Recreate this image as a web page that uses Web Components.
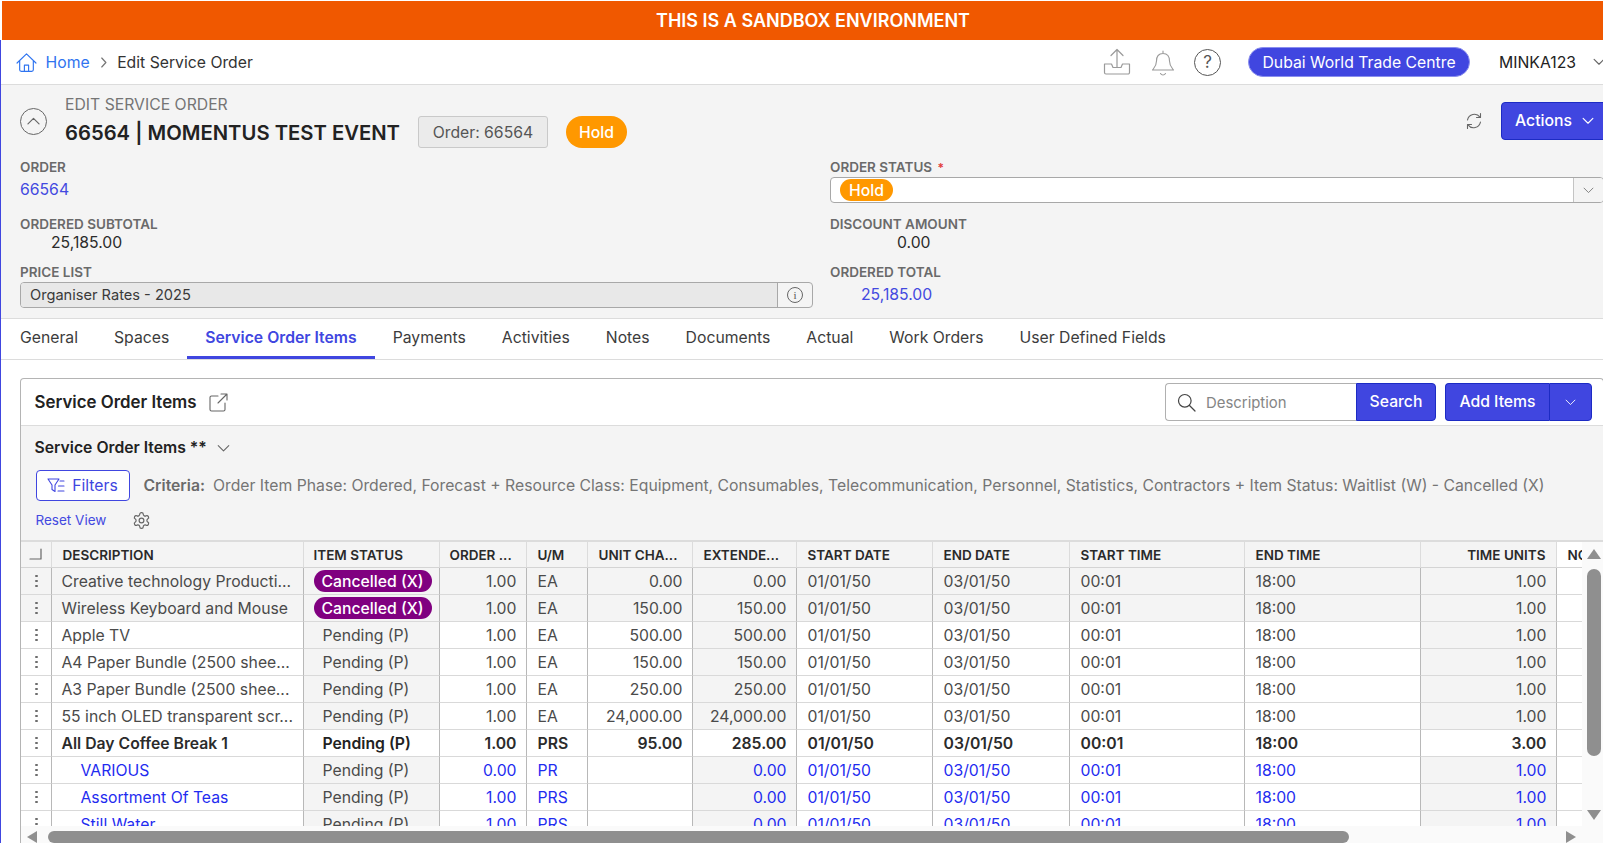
<!DOCTYPE html>
<html>
<head>
<meta charset="utf-8">
<title>Edit Service Order</title>
<style>
  html, body { margin: 0; height: 100%; overflow: hidden; background: #fff; }
  body { font-family: Inter, "Liberation Sans", sans-serif; color: #2b2b2b; }
  #app { width: 1624px; height: 843px; display: flex; flex-direction: column; }
</style>
</head>
<body>
<div id="app">
  <app-banner>THIS IS A SANDBOX ENVIRONMENT</app-banner>
  <div style="border-left:1.5px solid #4046e0;display:flex;flex-direction:column;flex:1;min-height:0">
    <app-topbar></app-topbar>
    <order-header></order-header>
    <tab-bar></tab-bar>
    <items-card></items-card>
  </div>
</div>

<script>
const ICONS = {
  home: '<path d="M1 10.5 10 1.8l9 8.7M3.5 8.5V17a1.5 1.5 0 0 0 1.5 1.5h10a1.5 1.5 0 0 0 1.5-1.5V8.5M8 18.5v-6h4v6"/>',
  chevronR: '<path d="M4 1.5 10 8l-6 6.5"/>',
  chevronD: '<path d="M1.5 4.5 8 11l6.5-6.5"/>',
  chevronU: '<path d="M5 15 12 8l7 7"/>',
  upload: '<path d="M14 19V1.5M8 7.5l6-6 6 6"/><path d="M1.5 16h7l1.5 3.5h8l1.5-3.5h7v8.500a1.500 1.500 0 0 1-1.500 1.500H3a1.500 1.500 0 0 1-1.500-1.500z"/>',
  bell: '<path d="M12 1v2.500M12 3.500c-4.500 0-6.500 3.300-6.500 7.500 0 5-2.500 7-4 9h21c-1.500-2-4-4-4-9 0-4.200-2-7.500-6.500-7.500zM9.500 23.500c.6 1 1.500 1.500 2.500 1.500s1.900-.5 2.500-1.500"/>',
  refresh: '<path d="M2.500 8A7 7 0 0 1 15 5.200M15.500 10a7 7 0 0 1-12.500 2.800"/><path d="M15.500 1.500v4h-4M2.500 16.500v-4h4"/>',
  external: '<path d="M9 3H2.500A1.500 1.500 0 0 0 1 4.500v12A1.500 1.500 0 0 0 2.500 18h12a1.500 1.500 0 0 0 1.500-1.500V10M9 10l8.500-8.500M12 1h6v6"/>',
  search: '<circle cx="7.800" cy="7.800" r="6.300"/><path d="m12.500 12.500 5.500 5.500"/>',
  filter: '<path d="M1 2h11L8 8v6.500L5 12.500V8zM13 4h4M11.500 9h5.500M11 14h6"/>',
  gear: '<path d="M12.220 2h-.44a2 2 0 0 0-2 2v.18a2 2 0 0 1-1 1.730l-.43.250a2 2 0 0 1-2 0l-.15-.08a2 2 0 0 0-2.730.730l-.22.380a2 2 0 0 0 .730 2.730l.15.100a2 2 0 0 1 1 1.720v.510a2 2 0 0 1-1 1.740l-.15.090a2 2 0 0 0-.730 2.730l.22.380a2 2 0 0 0 2.730.730l.15-.08a2 2 0 0 1 2 0l.43.250a2 2 0 0 1 1 1.730V20a2 2 0 0 0 2 2h.44a2 2 0 0 0 2-2v-.18a2 2 0 0 1 1-1.730l.43-.250a2 2 0 0 1 2 0l.15.080a2 2 0 0 0 2.730-.730l.22-.390a2 2 0 0 0-.730-2.730l-.15-.08a2 2 0 0 1-1-1.740v-.5a2 2 0 0 1 1-1.740l.15-.09a2 2 0 0 0 .730-2.730l-.22-.380a2 2 0 0 0-2.730-.730l-.15.080a2 2 0 0 1-2 0l-.43-.250a2 2 0 0 1-1-1.730V4a2 2 0 0 0-2-2z"/><circle cx="12" cy="12" r="3"/>',
  corner: '<path d="M1 11h11V1"/>'
};
const BOXES = { home: 20, chevronR: 16, chevronD: 16, chevronU: 24, upload: 28, bell: 24, refresh: 18, external: 19, search: 19, filter: 18, gear: 24, corner: 13 };

class SoIcon extends HTMLElement {
  connectedCallback() {
    const name = this.getAttribute("name");
    const w = this.getAttribute("w") || BOXES[name];
    const h = this.getAttribute("h") || w;
    const sw = this.getAttribute("sw") || 1.2;
    const box = BOXES[name];
    this.attachShadow({ mode: "open" }).innerHTML = `
      <style>
        :host { display: inline-flex; flex: none; line-height: 0; }
        svg { fill: none; stroke: currentColor; stroke-linecap: round; stroke-linejoin: round; }
      </style>
      <svg width="${w}" height="${h}" viewBox="0 0 ${box} ${box}" stroke-width="${sw}">${ICONS[name]}</svg>`;
  }
}
customElements.define("so-icon", SoIcon);

class AppBanner extends HTMLElement {
  constructor() {
    super();
    this.attachShadow({ mode: "open" }).innerHTML = `
      <style>
        :host {
          display: flex; flex: none; height: 39px; margin: 1px 0 0 2px;
          align-items: center; justify-content: center;
          background: #f05800; color: #fff;
          font: 600 18px/20px Inter, "Liberation Sans", sans-serif;
        }
      </style>
      <slot></slot>`;
  }
}
customElements.define("app-banner", AppBanner);

class AppTopbar extends HTMLElement {
  constructor() {
    super();
    this.attachShadow({ mode: "open" }).innerHTML = `
      <style>
        :host {
          display: flex; flex: none; height: 44px; align-items: center;
          padding: 0 19px 0 14.500px; border-bottom: 1px solid #dcdcdc;
          font: 400 15.750px Inter, "Liberation Sans", sans-serif; color: #333;
        }
        .home { color: #2f74f0; display: flex; align-items: center; gap: 9px; }
        .sep { color: #777; margin: 0 7.500px 0 9px; display: flex; }
        .right { margin-left: auto; display: flex; align-items: center; }
        .icons { display: flex; align-items: center; color: #9a9a9a; }
        .help {
          width: 27px; height: 27px; box-sizing: border-box; border: 1.500px solid #555; border-radius: 50%;
          display: flex; align-items: center; justify-content: center;
          font-size: 17px; color: #555; margin-left: 19px;
        }
        .site {
          margin-left: 27px; height: 30px; width: 222px; box-sizing: border-box;
          display: flex; align-items: center; justify-content: center;
          background: #4046e0; color: #fff; border-radius: 15px; border: 1px solid #8a8eee;
        }
        .user { margin-left: 29px; color: #222; }
        .chev { margin-left: 17px; color: #666; display: flex; }
      </style>
      <span class="home"><so-icon name="home" w="21" sw="1.100"></so-icon>Home</span>
      <span class="sep"><so-icon name="chevronR" w="11" sw="1.800"></so-icon></span>
      <span>Edit Service Order</span>
      <div class="right">
        <div class="icons">
          <so-icon name="upload" sw="1.200"></so-icon>
          <so-icon name="bell" w="24" h="28" sw="1.100" style="margin-left:20px"></so-icon>
        </div>
        <div class="help">?</div>
        <div class="site">Dubai World Trade Centre</div>
        <span class="user">MINKA123</span>
        <span class="chev"><so-icon name="chevronD" w="12" sw="1.500"></so-icon></span>
      </div>`;
  }
}
customElements.define("app-topbar", AppTopbar);

class SoField extends HTMLElement {
  constructor() {
    super();
    const req = this.hasAttribute("required") ? ' <i>*</i>' : "";
    this.attachShadow({ mode: "open" }).innerHTML = `
      <style>
        :host { display: block; min-width: 0; }
        label {
          display: block; height: 16px; line-height: 16px; margin-bottom: var(--gap, 2px);
          font-size: 13.500px; font-weight: 600; color: #6a6a6a; white-space: nowrap;
        }
        i { color: #e23b3b; font-style: normal; font-size: 12px; margin-left: 2px; }
      </style>
      <label>${this.getAttribute("label")}${req}</label>
      <slot></slot>`;
  }
}
customElements.define("so-field", SoField);

class OrderHeader extends HTMLElement {
  constructor() {
    super();
    this.attachShadow({ mode: "open" }).innerHTML = `
      <style>
        :host {
          display: block; flex: none; height: 234px; box-sizing: border-box;
          background: #f4f4f4; border-bottom: 1px solid #dcdcdc; padding: 10px 13px 0 19px;
          font: 400 15.750px/20px Inter, "Liberation Sans", sans-serif; color: #2b2b2b;
        }
        .head { display: flex; height: 53px; }
        .collapse {
          width: 27px; height: 27px; box-sizing: border-box; margin: 13px 18px 0 0;
          border: 1.300px solid #666; border-radius: 50%; color: #666;
          display: flex; align-items: center; justify-content: center;
        }
        .over { height: 18px; line-height: 20px; color: #757575; }
        .line { display: flex; align-items: center; height: 32px; margin-top: 3px; }
        h1 { margin: 0; font-size: 20.250px; font-weight: 600; line-height: 34px; height: 32px; color: #222; white-space: nowrap; }
        .chip {
          margin-left: 18px; width: 130px; height: 32px; box-sizing: border-box; padding-top: 1px;
          display: flex; align-items: center; justify-content: center;
          background: #ebebeb; border: 1px solid #c9c9c9; border-radius: 3px; color: #555;
        }
        .hold {
          margin-left: 18px; width: 61px; height: 32px; box-sizing: border-box; padding-top: 1px; border-radius: 16px;
          display: flex; align-items: center; justify-content: center;
          background: #ff9800; color: #fff; font-weight: 500;
        }
        .tools { margin-left: auto; display: flex; align-items: flex-start; padding-top: 7px; }
        .refresh { color: #666; margin: 10px 18px 0 0; }
        .actions {
          height: 38px; width: 110px; box-sizing: border-box; padding-left: 13px;
          display: flex; align-items: center; gap: 10px;
          background: #4046e0; color: #fff; border: 1px solid #1c2bc4; border-radius: 4px; font-weight: 500;
        }
        .fields {
          display: grid; grid-template-columns: 793px 1fr; column-gap: 17px;
          grid-template-rows: 45px 36px 44px; row-gap: 12px; margin-top: 11px;
          padding-right: 7px;
        }
        .link { color: #4349e0; }
        .num { padding-left: 31px; line-height: 19px; }
        .discount { padding-left: 67px; line-height: 19px; }
        .total { padding-left: 31px; color: #4349e0; line-height: 26px; }
        .price { display: flex; height: 26px; box-sizing: border-box; border: 1px solid #a8a8a8; border-radius: 4px; }
        .price span { flex: 1; background: #e8e8e8; border-right: 1px solid #a8a8a8; padding-left: 9px; line-height: 24px; font-size: 14.625px; color: #3a3a3a; border-radius: 3px 0 0 3px; }
        .info {
          flex: none; width: 34px; display: flex; align-items: center; justify-content: center;
        }
        .info b {
          width: 16px; height: 16px; box-sizing: border-box; border: 1px solid #666; border-radius: 50%;
          font: 400 11px/14px "Liberation Serif", serif; color: #555; text-align: center;
        }
        .select { display: flex; height: 26px; box-sizing: border-box; background: #fff; border: 1px solid #a8a8a8; border-radius: 4px; }
        .select div { flex: 1; padding-left: 9px; display: flex; align-items: center; }
        .select em {
          font-style: normal; font-weight: 500; color: #fff; background: #ff9800; border-radius: 11px;
          height: 22px; width: 53px; line-height: 23px; text-align: center;
        }
        .select span { flex: none; width: 29px; display: flex; align-items: center; justify-content: center; border-left: 1px solid #c4c4c4; background: #f4f4f4; color: #777; border-radius: 0 3px 3px 0; }
      </style>
      <div class="head">
        <div class="collapse"><so-icon name="chevronU" w="19" sw="1.500"></so-icon></div>
        <div>
          <div class="over">EDIT SERVICE ORDER</div>
          <div class="line">
            <h1>66564 | MOMENTUS TEST EVENT</h1>
            <div class="chip">Order: 66564</div>
            <div class="hold">Hold</div>
          </div>
        </div>
        <div class="tools">
          <so-icon class="refresh" name="refresh" sw="1.100"></so-icon>
          <div class="actions">Actions <so-icon name="chevronD" w="12" sw="1.500"></so-icon></div>
        </div>
      </div>
      <div class="fields">
        <so-field label="ORDER" style="--gap:5px"><div class="link">66564</div></so-field>
        <so-field label="ORDER STATUS" required>
          <div class="select"><div><em>Hold</em></div><span><so-icon name="chevronD" w="11" sw="1.300"></so-icon></span></div>
        </so-field>
        <so-field label="ORDERED SUBTOTAL" style="--gap:1px"><div class="num">25,185.00</div></so-field>
        <so-field label="DISCOUNT AMOUNT" style="--gap:1px"><div class="discount">0.00</div></so-field>
        <so-field label="PRICE LIST">
          <div class="price"><span>Organiser Rates - 2025</span><div class="info"><b>i</b></div></div>
        </so-field>
        <so-field label="ORDERED TOTAL"><div class="total">25,185.00</div></so-field>
      </div>`;
  }
}
customElements.define("order-header", OrderHeader);

class TabBar extends HTMLElement {
  constructor() {
    super();
    const tabs = ["General", "Spaces", "Service Order Items", "Payments", "Activities", "Notes", "Documents", "Actual", "Work Orders", "User Defined Fields"];
    this.attachShadow({ mode: "open" }).innerHTML = `
      <style>
        :host {
          display: flex; flex: none; height: 40px; border-bottom: 1px solid #dcdcdc; padding-left: 1px;
          font: 400 15.750px Inter, "Liberation Sans", sans-serif; color: #3c3c3c;
        }
        a { padding: 0 18px; display: flex; align-items: center; height: 40px; box-sizing: border-box; border-bottom: 3px solid transparent; white-space: nowrap; }
        a.on { color: #4046e0; font-weight: 600; border-bottom-color: #4046e0; }
      </style>
      ${tabs.map((t, i) => `<a class="${i == 2 ? "on" : ""}">${t}</a>`).join("")}`;
  }
}
customElements.define("tab-bar", TabBar);

class ItemsCard extends HTMLElement {
  constructor() {
    super();
    this.attachShadow({ mode: "open" }).innerHTML = `
      <style>
        :host {
          display: flex; flex-direction: column; flex: 1; min-height: 0; box-sizing: border-box;
          margin: 18px 20px 0 18.500px; border: 1px solid #b4b4b4; border-bottom: 0; border-radius: 4px 4px 0 0;
          font: 400 15.750px/20px Inter, "Liberation Sans", sans-serif; color: #333;
        }
        .top {
          flex: none; height: 47px; box-sizing: border-box; border-bottom: 1px solid #dcdcdc;
          display: flex; align-items: center; padding: 0 11px 0 14px;
        }
        .top b { font-size: 16.875px; font-weight: 600; color: #222; }
        .ext { color: #666; margin-left: 12px; }
        .right { margin-left: auto; display: flex; align-items: center; }
        .search { display: flex; width: 271px; height: 38px; box-sizing: border-box; }
        .search .box {
          flex: 1; display: flex; align-items: center; gap: 10px; padding-left: 11px;
          border: 1px solid #b0b0b0; border-right: 0; border-radius: 4px 0 0 4px; color: #444; background: #fff;
        }
        .box span { color: #858585; font-size: 14.900px; padding-top: 2px; }
        .btn { background: #4046e0; color: #fff; border: 1px solid #1c2bc4; font-weight: 500; display: flex; align-items: center; justify-content: center; box-sizing: border-box; }
        .search .btn { width: 80px; border-radius: 0 4px 4px 0; }
        .add { display: flex; height: 38px; margin-left: 9px; }
        .add .btn:first-child { width: 104px; border-radius: 4px 0 0 4px; border-right: 0; }
        .add .btn:last-child { width: 43px; border-radius: 0 4px 4px 0; }
        .filters { flex: none; background: #f4f4f4; padding: 11px 15px 10px; height: 114px; box-sizing: border-box; }
        .view { display: flex; align-items: center; height: 22px; margin-left: -1px; font-weight: 600; color: #222; white-space: nowrap; }
        .view so-icon { margin-left: 10px; color: #666; }
        .crit { display: flex; align-items: center; height: 31px; margin-top: 11px; white-space: nowrap; }
        .fbtn {
          width: 94px; height: 31px; box-sizing: border-box; border: 1px solid #4046e0; border-radius: 4px; background: #fff;
          color: #4046e0; display: flex; align-items: center; justify-content: center; gap: 7px;
        }
        .crit b { margin-left: 14px; color: #6a6a6a; font-weight: 600; }
        .crit span { margin-left: 8px; color: #757575; }
        .reset { display: flex; align-items: center; height: 20px; margin-top: 9px; font-size: 13.500px; color: #4349e0; }
        .reset so-icon { margin-left: 26px; color: #666; }
      </style>
      <div class="top">
        <b>Service Order Items</b>
        <so-icon class="ext" name="external" sw="1.100"></so-icon>
        <div class="right">
          <div class="search">
            <div class="box"><so-icon name="search" sw="1.200"></so-icon><span>Description</span></div>
            <div class="btn">Search</div>
          </div>
          <div class="add">
            <div class="btn">Add Items</div>
            <div class="btn"><so-icon name="chevronD" w="11" sw="1.300"></so-icon></div>
          </div>
        </div>
      </div>
      <div class="filters">
        <div class="view">Service Order Items **<so-icon name="chevronD" w="13" sw="1.300"></so-icon></div>
        <div class="crit">
          <div class="fbtn"><so-icon name="filter" sw="1.100"></so-icon>Filters</div>
          <b>Criteria:</b>
          <span>Order Item Phase: Ordered, Forecast + Resource Class: Equipment, Consumables, Telecommunication, Personnel, Statistics, Contractors + Item Status: Waitlist (W) - Cancelled (X)</span>
        </div>
        <div class="reset">Reset View<so-icon name="gear" w="19" sw="1.500"></so-icon></div>
      </div>
      <items-grid></items-grid>`;
  }
}
customElements.define("items-card", ItemsCard);

const COLS = [
  { t: "DESCRIPTION" }, { t: "ITEM STATUS" }, { t: "ORDER ..." }, { t: "U/M" }, { t: "UNIT CHA..." },
  { t: "EXTENDE..." }, { t: "START DATE" }, { t: "END DATE" }, { t: "START TIME" }, { t: "END TIME" },
  { t: "TIME UNITS", r: 1 }, { t: "NOTES" }
];
// kind: x = cancelled, n = normal, b = bold parent, k = blue child line
const ROWS = [
  ["x", "Creative technology Producti...", "Cancelled (X)", "1.00", "EA", "0.00", "0.00", "1.00"],
  ["x", "Wireless Keyboard and Mouse", "Cancelled (X)", "1.00", "EA", "150.00", "150.00", "1.00"],
  ["n", "Apple TV", "Pending (P)", "1.00", "EA", "500.00", "500.00", "1.00"],
  ["n", "A4 Paper Bundle (2500 shee...", "Pending (P)", "1.00", "EA", "150.00", "150.00", "1.00"],
  ["n", "A3 Paper Bundle (2500 shee...", "Pending (P)", "1.00", "EA", "250.00", "250.00", "1.00"],
  ["n", "55 inch OLED transparent scr...", "Pending (P)", "1.00", "EA", "24,000.00", "24,000.00", "1.00"],
  ["b", "All Day Coffee Break 1", "Pending (P)", "1.00", "PRS", "95.00", "285.00", "3.00"],
  ["k", "VARIOUS", "Pending (P)", "0.00", "PR", "", "0.00", "1.00"],
  ["k", "Assortment Of Teas", "Pending (P)", "1.00", "PRS", "", "0.00", "1.00"],
  ["k", "Still Water", "Pending (P)", "1.00", "PRS", "", "0.00", "1.00"]
];

class ItemsGrid extends HTMLElement {
  constructor() {
    super();
    const head = COLS.map(c => `<div class="hc ${c.r ? "end" : ""}">${c.t}</div>`).join("");
    const rows = ROWS.map(([kind, desc, status, qty, um, unit, ext, units]) => {
      const pill = status.startsWith("Cancelled") ? `<em>${status}</em>` : `<span class="st">${status}</span>`;
      const shade = kind == "n" || kind == "k";
      return `<div class="row ${kind}">
        <div class="c kebab"><i></i><i></i><i></i></div>
        <div class="c desc">${desc}</div>
        <div class="c status ${shade ? "g" : ""}">${pill}</div>
        <div class="c end">${qty}</div>
        <div class="c">${um}</div>
        <div class="c end">${unit}</div>
        <div class="c end ${shade ? "g" : ""}">${ext}</div>
        <div class="c">01/01/50</div>
        <div class="c">03/01/50</div>
        <div class="c">00:01</div>
        <div class="c">18:00</div>
        <div class="c end ${shade ? "g" : ""}">${units}</div>
        <div class="c last"></div>
      </div>`;
    }).join("");
    this.attachShadow({ mode: "open" }).innerHTML = `
      <style>
        :host {
          display: grid; flex: 1; min-height: 0; overflow: hidden;
          grid-template-columns: 1561px 21px; grid-template-rows: 1fr 17px;
          border-top: 2px solid #dcdcdc; background: #fff;
          font: 400 15.750px/20px Inter, "Liberation Sans", sans-serif;
          --cols: 31px 252px 136px 87px 61px 105px 104px 136px 137px 175px 176px 136px 100px;
        }
        .view { overflow: hidden; min-height: 0; }
        .row, .headrow { display: grid; grid-template-columns: var(--cols); width: 1636px; }
        .headrow { height: 26px; background: #f4f4f4; font-size: 13.500px; font-weight: 600; color: #2a2a2a; }
        .hc, .corner { border-right: 1px solid #dcdcdc; border-bottom: 1px solid #d4d4d4; padding: 0 10px 0 11px; line-height: 27px; white-space: nowrap; overflow: hidden; }
        .hc:nth-child(3), .hc:nth-child(4) { padding-left: 10px; }
        .corner { padding: 6px 0 0 8px; color: #666; line-height: 0; background: #f4f4f4; }
        .hc.end { text-align: right; }
        .hc:last-child { border-right: 0; background: #fff; }
        .row { height: 27px; color: #4a4a4a; }
        .c { border-right: 1px solid #b8b8b8; border-bottom: 1px solid #d9d9d9; padding: 0 9px 0 11px; line-height: 27px; white-space: nowrap; overflow: hidden; }
        .c.end { text-align: right; }
        .c.g { background: #f4f4f4; }
        .c.last { border-right: 0; background: #fff; }
        .row.x > .c:not(.last) { background: #f4f4f4; }
        .row.b { font-weight: 600; color: #2b2b2b; }
        .row.k > .c { color: #1f2cf0; }
        .row.k > .status { color: #4a4a4a; }
        .row.k > .desc { padding-left: 29px; }
        .row.b > .status { color: #222; }
        .c.desc { padding-left: 10px; }
        .c.status { padding: 0 0 0 10px; }
        .st { padding-left: 9px; }
        .c.kebab { padding: 0 0 0 2px; display: flex; flex-direction: column; align-items: center; justify-content: center; gap: 2.500px; }
        .kebab i { width: 2.500px; height: 2.500px; border-radius: 50%; background: #6d6d6d; }
        em {
          display: block; width: 118px; height: 22px; margin-top: 2px; line-height: 23px; text-align: center;
          font-style: normal; font-weight: 500; background: #800080; color: #fff; border-radius: 11px;
        }
        .vbar, .hbar, .end-corner { background: #fafafa; }
        .vbar { grid-row: 1; grid-column: 2; display: flex; flex-direction: column; align-items: center; padding: 7px 0 6px 3px; box-sizing: border-box; min-height: 0; }
        .up, .down, .left, .right { width: 0; height: 0; flex: none; border-style: solid; border-color: transparent; }
        .up { border-width: 0 7px 10px; border-bottom-color: #8f8f8f; }
        .down { border-width: 10px 7px 0; border-top-color: #8f8f8f; margin-top: auto; }
        .vthumb { width: 14px; height: 187px; margin-top: 10px; border-radius: 7px; background: #8f8f8f; }
        .hbar { grid-row: 2; grid-column: 1; display: flex; align-items: flex-start; padding: 5px 0 0 6px; box-sizing: border-box; }
        .left { border-width: 6px 10px 6px 0; border-right-color: #8f8f8f; }
        .right { border-width: 6px 0 6px 10px; border-left-color: #8f8f8f; margin-left: auto; margin-right: 6px; }
        .hthumb { width: 1301px; height: 12px; margin-left: 11px; border-radius: 6px; background: #8f8f8f; }
        .end-corner { grid-row: 2; grid-column: 2; }
      </style>
      <div class="view">
        <div class="headrow">
          <div class="corner"><so-icon name="corner" sw="1.200"></so-icon></div>
          ${head}
        </div>
        ${rows}
      </div>
      <div class="vbar"><div class="up"></div><div class="vthumb"></div><div class="down"></div></div>
      <div class="hbar"><div class="left"></div><div class="hthumb"></div><div class="right"></div></div>
      <div class="end-corner"></div>`;
  }
}
customElements.define("items-grid", ItemsGrid);
</script>
</body>
</html>
